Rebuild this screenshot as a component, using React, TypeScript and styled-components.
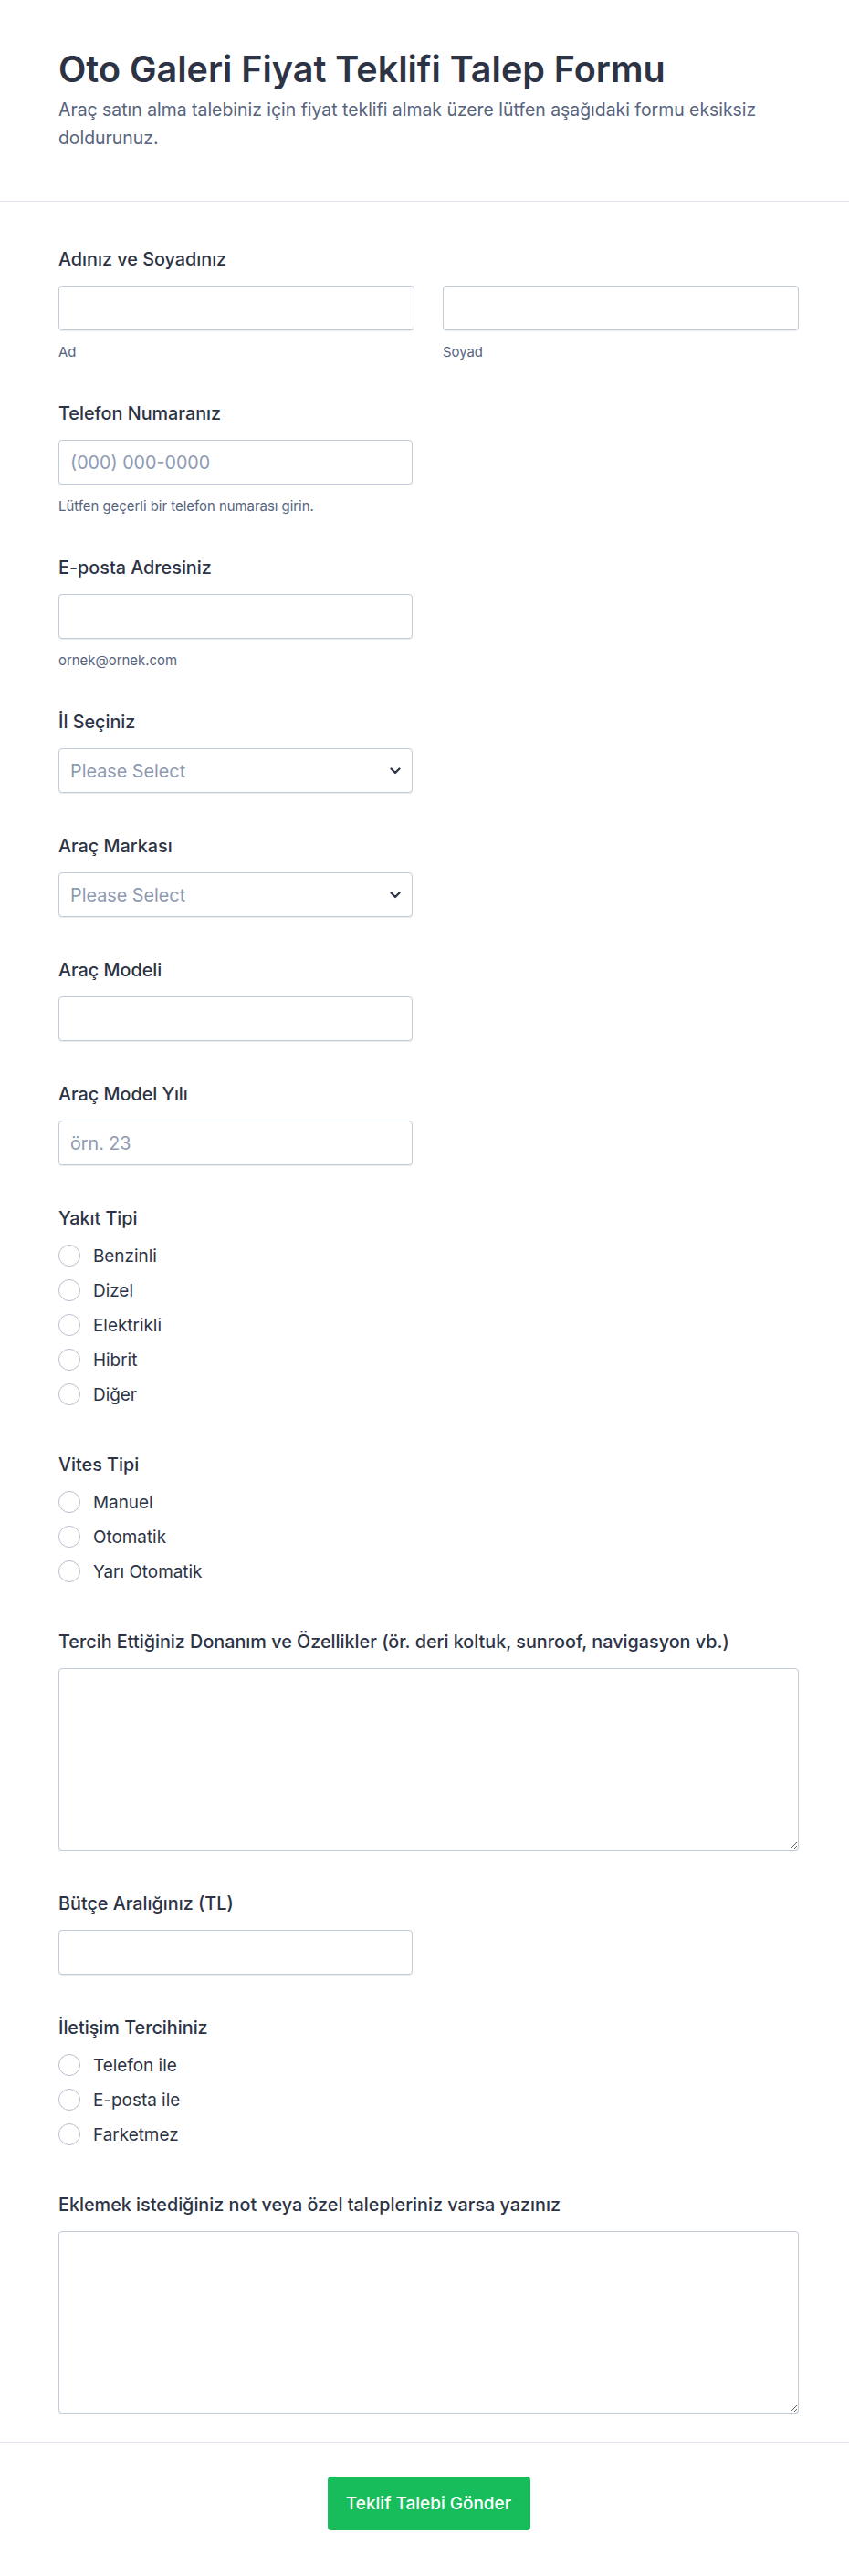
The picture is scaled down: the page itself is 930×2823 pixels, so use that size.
import { createGlobalStyle } from 'styled-components'
import styled from 'styled-components'

const GlobalStyle = createGlobalStyle`
  html, body {
    margin: 0;
    padding: 0;
    background: #ffffff;
  }
  body {
    font-family: Inter, "Noto Sans", sans-serif;
    color: #2c3345;
  }
  * {
    box-sizing: border-box;
  }
`

const Page = styled.div`
  width: 930px;
  background: #ffffff;
`

const Header = styled.header`
  padding: 52px 55px 53px 64px;
  border-bottom: 1px solid #e3e5ee;
`

const Title = styled.h1`
  margin: 0;
  font-size: 39.5px;
  line-height: 48px;
  font-weight: 600;
  color: #2c3345;
`

const Subtitle = styled.p`
  margin: 5px 0 0;
  font-size: 19.4px;
  line-height: 31px;
  color: #57647e;
`

const Body = styled.div`
  padding: 51px 55px 31px 64px;
  display: flex;
  flex-direction: column;
  gap: 46px;
`

const Field = styled.div`
  display: flex;
  flex-direction: column;
`

const Label = styled.label`
  font-size: 19.8px;
  line-height: 24px;
  font-weight: 500;
  color: #2c3345;
  margin-bottom: 17px;
`

const GroupLabel = styled(Label)`
  margin-bottom: 0;
`

const Row = styled.div`
  display: grid;
  grid-template-columns: 1fr 1fr;
  gap: 31px;
`

const Cell = styled.div`
  display: flex;
  flex-direction: column;
`

const Input = styled.input<{ $half?: boolean }>`
  width: ${({ $half }) => ($half ? '388px' : '100%')};
  height: 49px;
  padding: 0 12px;
  border: 1px solid #c3cad8;
  border-radius: 4px;
  background: #ffffff;
  font-family: inherit;
  font-size: 19.7px;
  color: #2c3345;
  outline: none;
  box-shadow: 0 1px 0 rgba(195, 202, 216, 0.35);

  &::placeholder {
    color: #8d9ab2;
  }
`

const SelectBox = styled.div`
  position: relative;
  width: 388px;
`

const Select = styled.select`
  appearance: none;
  width: 100%;
  height: 49px;
  padding: 0 36px 0 12px;
  border: 1px solid #c3cad8;
  border-radius: 4px;
  background: #ffffff;
  font-family: inherit;
  font-size: 19.8px;
  color: #8d9ab2;
  outline: none;
  box-shadow: 0 1px 0 rgba(195, 202, 216, 0.35);
`

const Chevron = styled.svg`
  position: absolute;
  right: 13px;
  top: 50%;
  margin-top: -4px;
  pointer-events: none;
`

const TextArea = styled.textarea`
  width: 100%;
  height: 200px;
  padding: 10px 12px;
  border: 1px solid #c3cad8;
  border-radius: 4px;
  font-family: inherit;
  font-size: 19px;
  color: #2c3345;
  outline: none;
  box-shadow: 0 1px 0 rgba(195, 202, 216, 0.35);
`

const SubLabel = styled.span`
  margin-top: 15px;
  font-size: 14.9px;
  line-height: 18px;
  color: #57647e;
`

const RadioList = styled.div`
  display: flex;
  flex-direction: column;
  margin-top: 10px;
`

const RadioRow = styled.label`
  display: flex;
  align-items: center;
  gap: 14px;
  height: 38px;
  font-size: 18.9px;
  color: #2c3345;
`

const RadioCircle = styled.input.attrs({ type: 'radio' })`
  appearance: none;
  margin: 0;
  width: 24px;
  height: 24px;
  border-radius: 50%;
  border: 1.5px solid #b8bfcc;
  background: #ffffff;
  flex-shrink: 0;
`

const Footer = styled.div`
  border-top: 1px solid #e3e5ee;
  padding: 37px 55px 50px 64px;
  display: flex;
  justify-content: center;
`

const SubmitButton = styled.button`
  width: 222px;
  height: 59px;
  border: none;
  border-radius: 4px;
  background: #18bd5b;
  color: #ffffff;
  font-family: inherit;
  font-size: 19px;
  font-weight: 500;
`

const ChevronIcon = () => (
  <Chevron width="12" height="8" viewBox="0 0 12 8">
    <path d="M1.5 1.5 L6 6 L10.5 1.5" fill="none" stroke="#2c3345" strokeWidth="2.2" strokeLinecap="round" strokeLinejoin="round" />
  </Chevron>
)

const RadioGroup: React.FC<{ label: string; name: string; options: string[] }> = ({ label, name, options }) => (
  <Field>
    <GroupLabel>{label}</GroupLabel>
    <RadioList>
      {options.map((o) => (
        <RadioRow key={o}>
          <RadioCircle name={name} />
          {o}
        </RadioRow>
      ))}
    </RadioList>
  </Field>
)

const SelectField: React.FC<{ label: string }> = ({ label }) => (
  <Field>
    <Label>{label}</Label>
    <SelectBox>
      <Select defaultValue="">
        <option value="">Please Select</option>
      </Select>
      <ChevronIcon />
    </SelectBox>
  </Field>
)

export default function App() {
  return (
    <Page>
      <GlobalStyle />
      <Header>
        <Title>Oto Galeri Fiyat Teklifi Talep Formu</Title>
        <Subtitle>
          Araç satın alma talebiniz için fiyat teklifi almak üzere lütfen aşağıdaki formu eksiksiz doldurunuz.
        </Subtitle>
      </Header>
      <Body>
        <Field>
          <Label>Adınız ve Soyadınız</Label>
          <Row>
            <Cell>
              <Input />
              <SubLabel>Ad</SubLabel>
            </Cell>
            <Cell>
              <Input />
              <SubLabel>Soyad</SubLabel>
            </Cell>
          </Row>
        </Field>

        <Field>
          <Label>Telefon Numaranız</Label>
          <Input $half placeholder="(000) 000-0000" />
          <SubLabel>Lütfen geçerli bir telefon numarası girin.</SubLabel>
        </Field>

        <Field>
          <Label>E-posta Adresiniz</Label>
          <Input $half />
          <SubLabel>ornek@ornek.com</SubLabel>
        </Field>

        <SelectField label="İl Seçiniz" />
        <SelectField label="Araç Markası" />

        <Field>
          <Label>Araç Modeli</Label>
          <Input $half />
        </Field>

        <Field>
          <Label>Araç Model Yılı</Label>
          <Input $half placeholder="örn. 23" />
        </Field>

        <RadioGroup label="Yakıt Tipi" name="yakit" options={['Benzinli', 'Dizel', 'Elektrikli', 'Hibrit', 'Diğer']} />
        <RadioGroup label="Vites Tipi" name="vites" options={['Manuel', 'Otomatik', 'Yarı Otomatik']} />

        <Field>
          <Label>Tercih Ettiğiniz Donanım ve Özellikler (ör. deri koltuk, sunroof, navigasyon vb.)</Label>
          <TextArea />
        </Field>

        <Field>
          <Label>Bütçe Aralığınız (TL)</Label>
          <Input $half />
        </Field>

        <RadioGroup label="İletişim Tercihiniz" name="iletisim" options={['Telefon ile', 'E-posta ile', 'Farketmez']} />

        <Field>
          <Label>Eklemek istediğiniz not veya özel talepleriniz varsa yazınız</Label>
          <TextArea />
        </Field>
      </Body>
      <Footer>
        <SubmitButton type="submit">Teklif Talebi Gönder</SubmitButton>
      </Footer>
    </Page>
  )
}
